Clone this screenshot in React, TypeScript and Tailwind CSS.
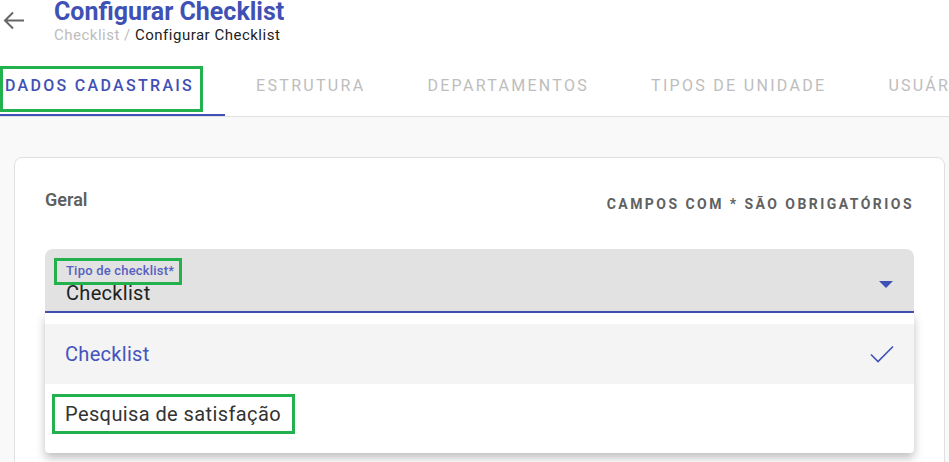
import React from 'react';

const tabs = ['Dados cadastrais', 'Estrutura', 'Departamentos', 'Tipos de unidade', 'Usuários'];

const App: React.FC = () => {
  return (
    <div className="h-[462px] w-[949px] overflow-hidden bg-white font-['Roboto',sans-serif]">
      {/* page header */}
      <header className="relative pl-[54px]">
        <svg className="absolute left-[3px] top-[10px]" width="22" height="22" viewBox="0 0 22 22" fill="none" stroke="#666" strokeWidth="2">
          <path d="M21 10.5H2.5M10 2.5L2 10.5l8 8" />
        </svg>
        <h1 className="text-[25px] leading-6 font-bold text-[#3f51b5]">Configurar Checklist</h1>
        <div className="mt-px text-[15px] leading-5 tracking-[0.5px]">
          <span className="text-[#bdbdbd]">Checklist / </span>
          <span className="text-[#212121]">Configurar Checklist</span>
        </div>
      </header>

      {/* tabs, scrolled a little to the left */}
      <nav className="mt-[19px] overflow-hidden border-b border-[#e0e0e0]">
        <div className="-ml-[26px] flex">
          {tabs.map((t, i) => (
            <div key={t} className="relative h-[52px] shrink-0 px-[31px] pt-[10px]">
              <span
                className={
                  'text-[16px] leading-6 uppercase tracking-[2.3px] ' +
                  (i === 0 ? 'font-medium text-[#3f51b5]' : 'text-[#bdbdbd]')
                }
              >
                {t}
              </span>
              {i === 0 && (
                <>
                  <div className="absolute bottom-0 left-0 right-0 h-[2px] bg-[#3f51b5]" />
                  <div className="absolute left-[26px] top-[2px] h-[46px] w-[203px] border-[3px] border-[#22b14c]" />
                </>
              )}
            </div>
          ))}
        </div>
      </nav>

      <main className="h-[345px] bg-[#f9f9f9] pl-[14px] pr-[4px] pt-[40px]">
        <section className="h-[400px] rounded-[8px] border border-[#e0e0e0] bg-white px-[30px] pt-[28px]">
          <div className="flex items-start justify-between">
            <h2 className="text-[18px] leading-7 font-semibold text-[#5f5f5f]">Geral</h2>
            <p className="mt-[8px] text-[14px] leading-5 font-bold uppercase tracking-[2.45px] text-[#616161]">
              Campos com * são obrigatórios
            </p>
          </div>

          {/* select, open */}
          <div className="relative mt-[35px]">
            <div className="relative h-[64px] rounded-t-[8px] border-b-2 border-[#3f51b5] bg-[#e2e2e2] pl-[21px] pt-[14px]">
              <div className="relative w-fit text-[13px] leading-4 font-medium tracking-[0.2px] text-[#5561c0]">
                Tipo de checklist*
                <div className="absolute -left-[12px] -top-[5px] h-[27px] w-[128px] border-[3px] border-[#22b14c]" />
              </div>
              <div className="mt-[2px] text-[20px] leading-6 tracking-[0.3px] text-[#212121]">Checklist</div>
              <svg className="absolute right-[21px] top-[32px]" width="14" height="7" viewBox="0 0 14 7">
                <path d="M0 0h14L7 7z" fill="#3f51b5" />
              </svg>
            </div>

            <ul className="absolute left-0 right-0 top-full z-10 rounded-b-[4px] bg-white pb-[9px] pt-[11px] shadow-[0_5px_10px_rgba(0,0,0,0.25)]">
              <li className="flex h-[60px] items-center justify-between bg-[#f4f4f4] pl-[20px] pr-[20px]">
                <span className="text-[20px] text-[#4353bd] tracking-[0.3px]">Checklist</span>
                <svg width="24" height="18" viewBox="0 0 24 18" fill="none" stroke="#3f51b5" strokeWidth="1.6">
                  <path d="M1 9.5l7 7L23 1.5" />
                </svg>
              </li>
              <li className="flex h-[60px] items-center pl-[20px]">
                <span className="relative text-[20px] text-[#333] tracking-[0.4px]">
                  Pesquisa de satisfação
                  <span className="absolute -left-[13px] -top-[5px] h-[40px] w-[243px] border-[3px] border-[#22b14c]" />
                </span>
              </li>
            </ul>
          </div>
        </section>
      </main>
    </div>
  );
};

export default App;
